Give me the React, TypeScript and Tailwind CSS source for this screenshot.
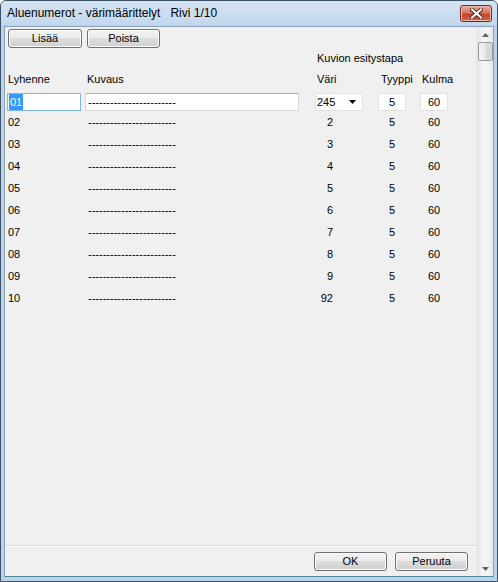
import React from 'react';

const rows: [string, string][] = [
  ['02', '2'],
  ['03', '3'],
  ['04', '4'],
  ['05', '5'],
  ['06', '6'],
  ['07', '7'],
  ['08', '8'],
  ['09', '9'],
  ['10', '92'],
];

const DASHES = '------------------------';

const WinButton: React.FC<{ label: string; className?: string }> = ({ label, className }) => (
  <button
    className={`h-[19px] rounded-[3px] border border-[#707070] bg-[linear-gradient(to_bottom,#f2f2f2_0%,#ebebeb_50%,#dddddd_50%,#cfcfcf_100%)] text-[11px] leading-none text-black shadow-[inset_0_0_0_1px_#fcfcfc] ${className ?? 'w-[74px]'}`}
  >
    {label}
  </button>
);

const App: React.FC = () => {
  return (
    <div className="h-[582px] w-[498px] font-['Liberation_Sans',Arial,sans-serif] text-[11px] text-black">
      <div className="flex h-full w-full flex-col rounded-t-[6px] border border-[#3d5166] bg-[#bcd2e9]">
        {/* title bar */}
        <div className="flex h-[24px] shrink-0 items-center justify-between rounded-t-[5px] bg-[linear-gradient(to_bottom,#d6e4f3,#c2d7ed)] pl-[6px] pr-[5px]">
          <span className="whitespace-pre text-[12px] text-black">Aluenumerot - värimäärittelyt   Rivi 1/10</span>
          <div className="flex h-[17px] w-[32px] items-center justify-center rounded-[3px] border border-[#6e2a22] bg-[linear-gradient(to_bottom,#e9a998_0%,#d9775f_45%,#c4442b_55%,#cf6a4c_100%)] shadow-[inset_0_0_0_1px_#f2b8a8]">
            <svg width="13" height="11" viewBox="0 0 13 11">
              <path d="M2 1.5 L11 9.5 M11 1.5 L2 9.5" stroke="#5a1c14" strokeWidth="4" strokeLinecap="square" />
              <path d="M2 1.5 L11 9.5 M11 1.5 L2 9.5" stroke="#ffffff" strokeWidth="2.2" strokeLinecap="square" />
            </svg>
          </div>
        </div>

        {/* client area */}
        <div className="mx-[3px] mb-[4px] mt-[1px] flex flex-1 border border-[#8aa3bc] border-b-[#4f8a99] bg-[#f0f0f0]">
          <div className="flex flex-1 flex-col">
            <div className="flex-1">
              <div className="flex gap-[5px] pl-[3px] pt-[2px]">
                <WinButton label="Lisää" />
                <WinButton label="Poista" className="w-[73px]" />
              </div>

              <div className="flex h-[18px] items-end pl-[312px]">Kuvion esitystapa</div>

              {/* header */}
              <div className="mt-[6px] flex h-[14px] items-center">
                <span className="w-[82px] pl-[3px]">Lyhenne</span>
                <span className="w-[230px]">Kuvaus</span>
                <span className="w-[64px]">Väri</span>
                <span className="w-[41px]">Tyyppi</span>
                <span>Kulma</span>
              </div>

              {/* first (editable) row */}
              <div className="mt-[5px] flex h-[20px] items-end pl-[2px]">
                <div className="flex h-[18px] w-[74px] items-center border border-[#7eb4ea] bg-white pl-[1px]">
                  <span className="bg-[#3399ff] px-[1px] text-white">01</span>
                </div>
                <div className="ml-[4px] flex h-[18px] w-[214px] items-center border border-[#d9d9d9] border-t-[#abadb3] bg-white pl-[2px]">
                  {DASHES}
                </div>
                <div className="ml-[16px] flex h-[18px] w-[48px] items-center justify-between border border-[#e3e3e3] bg-white pl-[1px] pr-[6px]">
                  <span>245</span>
                  <svg width="7" height="4" viewBox="0 0 7 4">
                    <path d="M0 0 H7 L3.5 4 Z" fill="#000" />
                  </svg>
                </div>
                <div className="ml-[15px] flex h-[18px] w-[28px] items-center justify-center border border-[#e3e3e3] bg-white">5</div>
                <div className="ml-[14px] flex h-[18px] w-[28px] items-center justify-center border border-[#e3e3e3] bg-white">60</div>
              </div>

              {rows.map(([code, color]) => (
                <div key={code} className="flex h-[22px] items-center pl-[2px]">
                  <span className="w-[74px] pl-[1px]">{code}</span>
                  <span className="ml-[4px] w-[214px] pl-[3px]">{DASHES}</span>
                  <span className="ml-[16px] w-[18px] text-right">{color}</span>
                  <span className="ml-[45px] w-[28px] text-center">5</span>
                  <span className="ml-[14px] w-[28px] text-center">60</span>
                </div>
              ))}
            </div>

            {/* bottom buttons */}
            <div className="flex h-[31px] shrink-0 items-center justify-end gap-[8px] border-t border-[#d5d5d5] pr-[8px] shadow-[inset_0_1px_0_#ffffff]">
              <WinButton label="OK" className="w-[73px]" />
              <WinButton label="Peruuta" className="w-[73px]" />
            </div>
          </div>

          {/* scrollbar */}
          <div className="flex w-[17px] shrink-0 flex-col items-center border-l border-[#e8e8e8] bg-[linear-gradient(to_right,#e6e6e6,#f4f4f4_40%,#f4f4f4_60%,#e9e9e9)]">
            <div className="flex h-[15px] w-full items-center justify-center">
              <svg width="7" height="4" viewBox="0 0 7 4">
                <path d="M3.5 0 L7 4 H0 Z" fill="#606060" />
              </svg>
            </div>
            <div className="h-[19px] w-[15px] rounded-[2px] border border-[#9a9a9a] bg-[linear-gradient(to_right,#f3f3f3,#e8e8e8_50%,#d9d9d9_50%,#d6d6d6)]" />
            <div className="flex-1" />
            <div className="flex h-[15px] w-full items-center justify-center">
              <svg width="7" height="4" viewBox="0 0 7 4">
                <path d="M0 0 H7 L3.5 4 Z" fill="#606060" />
              </svg>
            </div>
          </div>
        </div>
      </div>
    </div>
  );
};

export default App;
